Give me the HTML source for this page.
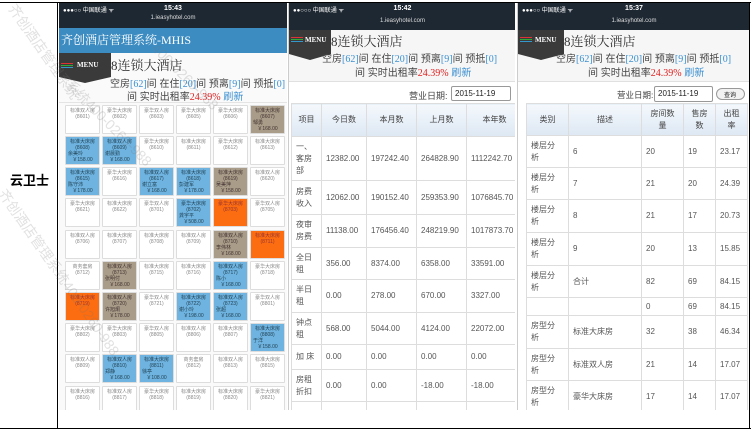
<!DOCTYPE html>
<html><head><meta charset="utf-8"><style>
*{box-sizing:border-box;margin:0;padding:0}
body{width:751px;height:431px;background:#fff;position:relative;overflow:hidden;font-family:"Liberation Sans","Noto Sans CJK SC",sans-serif;color:#555}
.a{position:absolute}
.line{position:absolute;background:#000}
.status{position:absolute;background:#1e2832;color:#fff;font-size:7px;text-align:center}
.status .t{position:absolute;left:0;right:0;top:2px;font-weight:bold}
.status .u{position:absolute;left:0;right:0;top:12px;font-size:6px;color:#ddd}
.status .l{position:absolute;left:4px;top:2px;font-size:6px}
.menu{position:absolute;background:#3a3a3a;color:#fff;font-family:"Liberation Serif",serif;font-size:7px;font-weight:bold;clip-path:polygon(0 0,100% 0,100% 80%,50% 100%,0 80%)}
.menu i{position:absolute;left:2px;width:12px;height:1px}
.ttl{position:absolute;font-size:13px;color:#333;font-family:"Liberation Serif","Noto Serif CJK SC",serif}
.st{position:absolute;font-size:10px;color:#444;white-space:nowrap}
.st b{color:#3a8fd0;font-weight:normal;font-family:"Liberation Serif",serif}
.st em{color:#e02020;font-style:normal;font-family:"Liberation Serif",serif}
.c{position:absolute;width:35px;height:29px;border:1px solid #ddd;background:#fff;font-size:5px;color:#888;text-align:center;line-height:6px;padding-top:2px;border-radius:1px}
.c.b{background:#6fb3e0;color:#245}
.c.r{background:#a99c88;color:#433}
.c.o{background:#fb6d10;color:#933}
.c span{display:block;text-align:left;padding-left:2px}
table{border-collapse:collapse;position:absolute;font-size:8px;color:#555}
td,th{border:1px solid #ddd;padding:0 4px;text-align:left;font-weight:normal;vertical-align:middle;line-height:12px}
th{background:linear-gradient(#f4f8fc,#dde8f4);text-align:center;color:#444}
.inp{position:absolute;border:1px solid #999;border-radius:2px;font-size:8px;color:#222;padding:2px 3px;background:#fff}
.wm{position:absolute;color:rgba(120,120,120,.22);font-size:14px;white-space:nowrap;transform-origin:0 0}
</style></head><body>

<!-- panel 1 -->
<div class="a" style="left:59px;top:3px;width:228px;height:407px;background:#fafafa;overflow:hidden">
  <div class="status" style="left:0;top:0;width:228px;height:25px"><div class="l">●●●○○ 中国联通 ᯤ</div><div class="t">15:43</div><div class="u">1.ieasyhotel.com</div></div>
  <div class="a" style="left:0;top:25px;width:228px;height:25px;background:#3c8cc2;color:#fff;font-size:12px;padding:3px 2px;font-family:'Liberation Serif','Noto Serif CJK SC',serif">齐创酒店管理系统-MHIS</div>
  <div class="menu" style="left:0;top:50px;width:52px;height:30px"><i style="top:10px;background:#d33"></i><i style="top:12px;background:#3a3"></i><i style="top:14px;background:#39c"></i><span style="position:absolute;left:18px;top:8px">MENU</span></div>
  <div class="ttl" style="left:52px;top:52px">8连锁大酒店</div>
  <div class="st" style="left:51px;top:72px">空房<b>[62]</b>间 在住<b>[20]</b>间 预离<b>[9]</b>间 预抵<b>[0]</b></div>
  <div class="st" style="left:68px;top:85px">间 实时出租率<em>24.39%</em> <b>刷新</b></div>
  <div class="a" style="left:0;top:99px;width:228px;height:1px;background:#e4e4e4"></div>
</div>
<div id="grid">
<div class="c" style="left:65px;top:105px">标准双人房<br>(8601)</div>
<div class="c" style="left:102px;top:105px">豪华大床房<br>(8602)</div>
<div class="c" style="left:139px;top:105px">豪华双人房<br>(8603)</div>
<div class="c" style="left:176px;top:105px">豪华大床房<br>(8605)</div>
<div class="c" style="left:213px;top:105px">豪华大床房<br>(8606)</div>
<div class="c r" style="left:250px;top:105px">标准大床房<br>(8607)<span>邹勇</span>￥168.00</div>
<div class="c b" style="left:65px;top:136px">标准大床房<br>(8608)<span>余美玲</span>￥158.00</div>
<div class="c b" style="left:102px;top:136px">标准双人房<br>(8609)<span>谢晨勤</span>￥168.00</div>
<div class="c" style="left:139px;top:136px">豪华大床房<br>(8610)</div>
<div class="c" style="left:176px;top:136px">标准大床房<br>(8611)</div>
<div class="c" style="left:213px;top:136px">豪华大床房<br>(8612)</div>
<div class="c" style="left:250px;top:136px">标准大床房<br>(8613)</div>
<div class="c b" style="left:65px;top:167px">标准大床房<br>(8615)<span>陈守沛</span>￥178.00</div>
<div class="c" style="left:102px;top:167px">豪华大床房<br>(8616)</div>
<div class="c b" style="left:139px;top:167px">标准双人房<br>(8617)<span>谢立富</span>￥168.00</div>
<div class="c b" style="left:176px;top:167px">标准大床房<br>(8618)<span>彭建军</span>￥178.00</div>
<div class="c r" style="left:213px;top:167px">标准大床房<br>(8619)<span>吴美萍</span>￥158.00</div>
<div class="c" style="left:250px;top:167px">标准双人房<br>(8620)</div>
<div class="c" style="left:65px;top:198px">豪华大床房<br>(8621)</div>
<div class="c" style="left:102px;top:198px">标准大床房<br>(8622)</div>
<div class="c" style="left:139px;top:198px">豪华双人房<br>(8701)</div>
<div class="c b" style="left:176px;top:198px">豪华大床房<br>(8702)<span>龚宇平</span>￥508.00</div>
<div class="c o" style="left:213px;top:198px">豪华大床房<br>(8703)</div>
<div class="c" style="left:250px;top:198px">豪华双人房<br>(8705)</div>
<div class="c" style="left:65px;top:230px">标准双人房<br>(8706)</div>
<div class="c" style="left:102px;top:230px">标准大床房<br>(8707)</div>
<div class="c" style="left:139px;top:230px">标准大床房<br>(8708)</div>
<div class="c" style="left:176px;top:230px">标准双人房<br>(8709)</div>
<div class="c r" style="left:213px;top:230px">标准双人房<br>(8710)<span>李伟林</span>￥168.00</div>
<div class="c o" style="left:250px;top:230px">标准大床房<br>(8711)</div>
<div class="c" style="left:65px;top:261px">商务套房<br>(8712)</div>
<div class="c r" style="left:102px;top:261px">标准双人房<br>(8713)<span>张明付</span>￥168.00</div>
<div class="c" style="left:139px;top:261px">标准大床房<br>(8715)</div>
<div class="c" style="left:176px;top:261px">标准大床房<br>(8716)</div>
<div class="c b" style="left:213px;top:261px">标准双人房<br>(8717)<span>陈小</span>￥168.00</div>
<div class="c" style="left:250px;top:261px">豪华大床房<br>(8718)</div>
<div class="c o" style="left:65px;top:292px">标准大床房<br>(8719)</div>
<div class="c r" style="left:102px;top:292px">标准双人房<br>(8720)<span>许旭炯</span>￥178.00</div>
<div class="c" style="left:139px;top:292px">豪华双人房<br>(8721)</div>
<div class="c b" style="left:176px;top:292px">标准大床房<br>(8722)<span>谢小玲</span>￥198.00</div>
<div class="c b" style="left:213px;top:292px">标准双人房<br>(8723)<span>张超</span>￥168.00</div>
<div class="c" style="left:250px;top:292px">豪华双人房<br>(8801)</div>
<div class="c" style="left:65px;top:323px">豪华大床房<br>(8802)</div>
<div class="c" style="left:102px;top:323px">豪华大床房<br>(8803)</div>
<div class="c" style="left:139px;top:323px">豪华双人房<br>(8805)</div>
<div class="c" style="left:176px;top:323px">标准双人房<br>(8806)</div>
<div class="c" style="left:213px;top:323px">标准大床房<br>(8807)</div>
<div class="c b" style="left:250px;top:323px">标准大床房<br>(8808)<span>于洋</span>￥158.00</div>
<div class="c" style="left:65px;top:354px">标准双人房<br>(8809)</div>
<div class="c b" style="left:102px;top:354px">标准双人房<br>(8810)<span>郑静</span>￥168.00</div>
<div class="c b" style="left:139px;top:354px">标准大床房<br>(8811)<span>徐亭</span>￥108.00</div>
<div class="c" style="left:176px;top:354px">商务套房<br>(8812)</div>
<div class="c" style="left:213px;top:354px">标准双人房<br>(8813)</div>
<div class="c" style="left:250px;top:354px">标准大床房<br>(8815)</div>
<div class="a" style="left:59px;top:385px;width:228px;height:25px;overflow:hidden">
<div class="c" style="left:6px;top:1px">标准大床房<br>(8816)</div>
<div class="c" style="left:43px;top:1px">标准双人房<br>(8817)</div>
<div class="c" style="left:80px;top:1px">豪华大床房<br>(8818)</div>
<div class="c" style="left:117px;top:1px">标准大床房<br>(8819)</div>
<div class="c" style="left:154px;top:1px">标准大床房<br>(8820)</div>
<div class="c" style="left:191px;top:1px">豪华大床房<br>(8821)</div>
</div>
</div>

<!-- panel 2 -->
<div class="a" style="left:288px;top:3px;width:227px;height:407px;background:#fff;overflow:hidden;border-left:1px solid #ccc">
  <div class="status" style="left:0;top:0;width:227px;height:27px"><div class="l">●●○○○ 中国联通 ᯤ</div><div class="t">15:42</div><div class="u" style="top:15px">1.ieasyhotel.com</div></div>
  <div class="a" style="left:0;top:27px;width:227px;height:52px;background:#f6f6f6;border-bottom:1px solid #e0e0e0"></div>
  <div class="menu" style="left:0;top:27px;width:42px;height:30px"><i style="top:7px;background:#d33"></i><i style="top:9px;background:#3a3"></i><i style="top:11px;background:#39c"></i><span style="position:absolute;left:16px;top:6px">MENU</span></div>
  <div class="ttl" style="left:42px;top:28px">8连锁大酒店</div>
  <div class="st" style="left:33px;top:47px">空房<b>[62]</b>间 在住<b>[20]</b>间 预离<b>[9]</b>间 预抵<b>[0]</b></div>
  <div class="st" style="left:66px;top:61px">间 实时出租率<em>24.39%</em> <b>刷新</b></div>
  <div class="st" style="left:120px;top:86px;font-size:9px">营业日期:</div>
  <div class="inp" style="left:162px;top:83px;width:60px;height:15px">2015-11-19</div>
  <table style="left:2px;top:100px;width:232px">
    <tr style="height:33px"><th style="width:30px">项目</th><th style="width:45px">今日数</th><th style="width:50px">本月数</th><th style="width:50px">上月数</th><th>本年数</th></tr>
    <tr style="height:44px"><td>一、<br>客房<br>部</td><td>12382.00</td><td>197242.40</td><td>264828.90</td><td>1112242.70</td></tr>
    <tr style="height:34px"><td>房费<br>收入</td><td>12062.00</td><td>190152.40</td><td>259353.90</td><td>1076845.70</td></tr>
    <tr style="height:33px"><td>夜审<br>房费</td><td>11138.00</td><td>176456.40</td><td>248219.90</td><td>1017873.70</td></tr>
    <tr style="height:32px"><td>全日<br>租</td><td>356.00</td><td>8374.00</td><td>6358.00</td><td>33591.00</td></tr>
    <tr style="height:33px"><td>半日<br>租</td><td>0.00</td><td>278.00</td><td>670.00</td><td>3327.00</td></tr>
    <tr style="height:32px"><td>钟点<br>租</td><td>568.00</td><td>5044.00</td><td>4124.00</td><td>22072.00</td></tr>
    <tr style="height:25px"><td>加 床</td><td>0.00</td><td>0.00</td><td>0.00</td><td>0.00</td></tr>
    <tr style="height:32px"><td>房租<br>折扣</td><td>0.00</td><td>0.00</td><td>-18.00</td><td>-18.00</td></tr>
    <tr style="height:30px"><td>客房</td><td></td><td></td><td></td><td></td></tr>
  </table>
</div>

<!-- panel 3 -->
<div class="a" style="left:517px;top:3px;width:232px;height:407px;background:#fff;overflow:hidden;border-left:1px solid #ccc">
  <div class="status" style="left:0;top:0;width:232px;height:27px"><div class="l">●●●○○ 中国联通 ᯤ</div><div class="t">15:37</div><div class="u" style="top:15px">1.ieasyhotel.com</div></div>
  <div class="a" style="left:0;top:27px;width:232px;height:52px;background:#f6f6f6;border-bottom:1px solid #e0e0e0"></div>
  <div class="menu" style="left:0;top:27px;width:46px;height:30px"><i style="top:7px;background:#d33"></i><i style="top:9px;background:#3a3"></i><i style="top:11px;background:#39c"></i><span style="position:absolute;left:17px;top:6px">MENU</span></div>
  <div class="ttl" style="left:46px;top:28px">8连锁大酒店</div>
  <div class="st" style="left:38px;top:47px">空房<b>[62]</b>间 在住<b>[20]</b>间 预离<b>[9]</b>间 预抵<b>[0]</b></div>
  <div class="st" style="left:70px;top:61px">间 实时出租率<em>24.39%</em> <b>刷新</b></div>
  <div class="st" style="left:99px;top:86px;font-size:8.5px">营业日期:</div>
  <div class="inp" style="left:136px;top:83px;width:59px;height:16px">2015-11-19</div>
  <div class="inp" style="left:198px;top:85px;width:29px;height:12px;border-radius:6px;font-size:6px;padding:1px 7px;background:#f2f2f2">查询</div>
  <table style="left:8px;top:100px;width:222px">
    <tr style="height:32px"><th style="width:42px">类别</th><th style="width:73px">描述</th><th style="width:42px">房间数<br>量</th><th style="width:32px">售房<br>数</th><th>出租<br>率</th></tr>
    <tr style="height:32px"><td>楼层分<br>析</td><td>6</td><td>20</td><td>19</td><td>23.17</td></tr>
    <tr style="height:32px"><td>楼层分<br>析</td><td>7</td><td>21</td><td>20</td><td>24.39</td></tr>
    <tr style="height:33px"><td>楼层分<br>析</td><td>8</td><td>21</td><td>17</td><td>20.73</td></tr>
    <tr style="height:33px"><td>楼层分<br>析</td><td>9</td><td>20</td><td>13</td><td>15.85</td></tr>
    <tr style="height:32px"><td>楼层分<br>析</td><td>合计</td><td>82</td><td>69</td><td>84.15</td></tr>
    <tr style="height:18px"><td></td><td></td><td>0</td><td>69</td><td>84.15</td></tr>
    <tr style="height:33px"><td>房型分<br>析</td><td>标准大床房</td><td>32</td><td>38</td><td>46.34</td></tr>
    <tr style="height:32px"><td>房型分<br>析</td><td>标准双人房</td><td>21</td><td>14</td><td>17.07</td></tr>
    <tr style="height:33px"><td>房型分<br>析</td><td>豪华大床房</td><td>17</td><td>14</td><td>17.07</td></tr>
  </table>
</div>

<!-- outer frame -->
<div class="line" style="left:0;top:2px;width:751px;height:1px"></div>
<div class="line" style="left:0;top:428px;width:751px;height:1px"></div>
<div class="line" style="left:57px;top:2px;width:1px;height:427px"></div>
<div class="line" style="left:749px;top:2px;width:1px;height:427px"></div>
<div class="a" style="left:10px;top:170px;font-size:13px;color:#000;font-weight:bold">云卫士</div>

<!-- watermarks -->
<div class="wm" style="left:20px;top:0px;transform:rotate(55deg)">齐创酒店管理系统</div>
<div class="wm" style="left:75px;top:75px;transform:rotate(45deg)">系统400-0260-988</div>
<div class="wm" style="left:10px;top:185px;transform:rotate(55deg)">齐创酒店管理系统400-0260-988</div>
<div class="wm" style="left:160px;top:40px;transform:rotate(45deg)">400-0260-988</div>
</body></html>
